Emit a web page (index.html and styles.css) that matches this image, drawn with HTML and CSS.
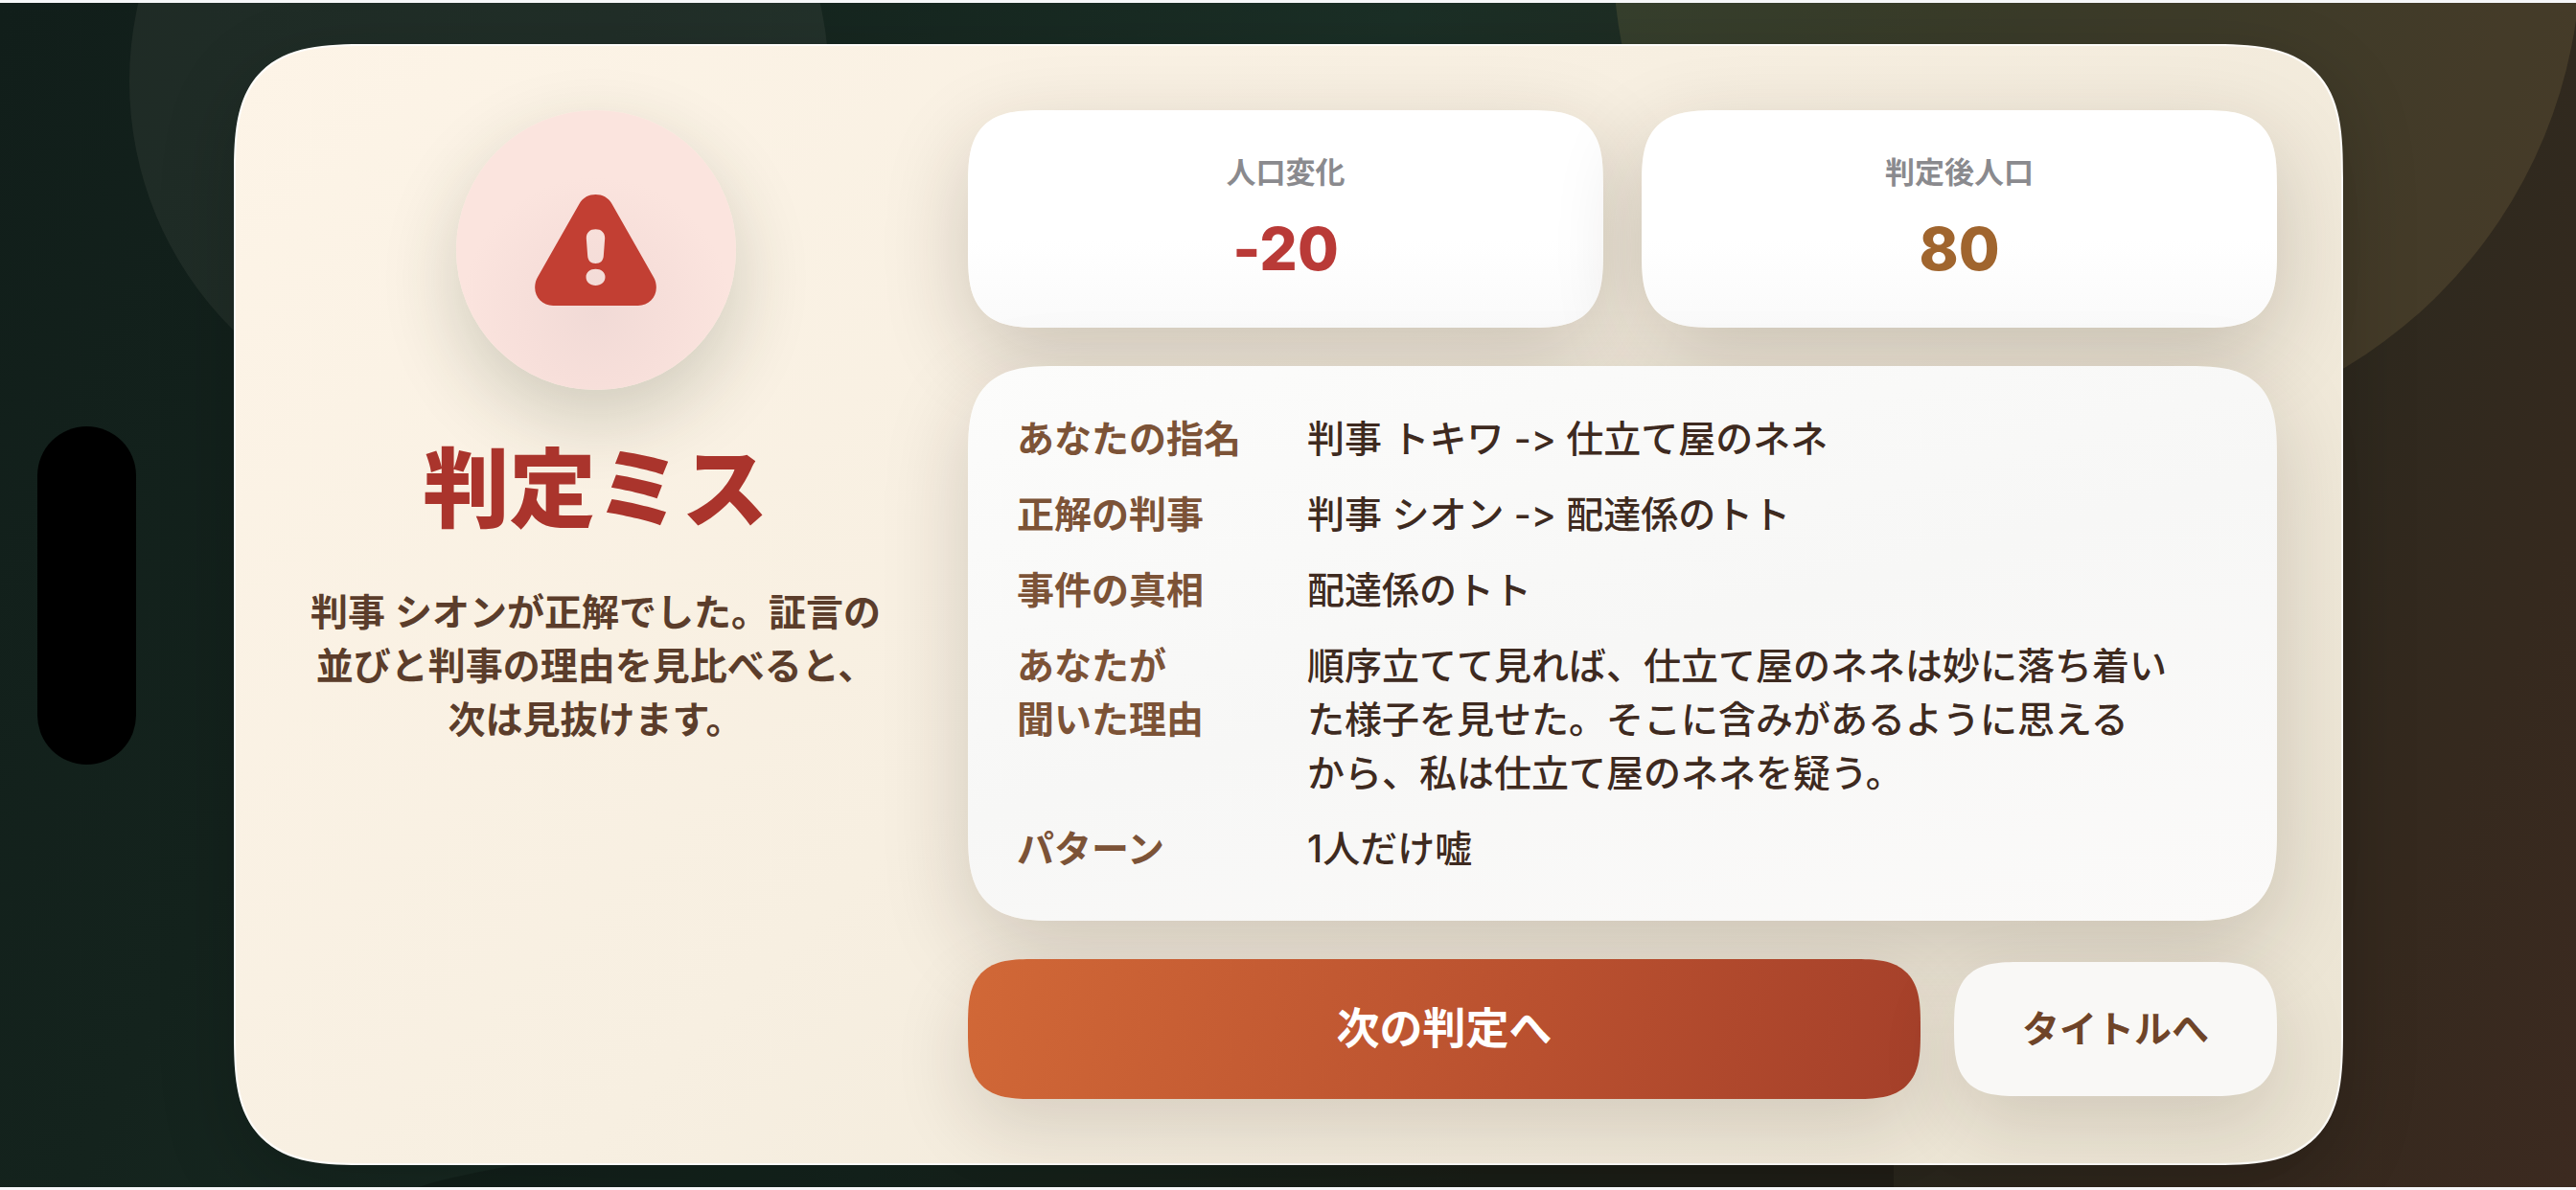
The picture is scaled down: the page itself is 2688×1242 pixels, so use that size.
FILE: index.html
```html
<!DOCTYPE html>
<html lang="ja">
<head>
<meta charset="utf-8">
<title>判定ミス</title>
<link rel="stylesheet" href="styles.css">
</head>
<body>
<div class="stage">
  <div class="orb orb-left"></div>
  <div class="orb orb-right"></div>
  <div class="hill"></div>
  <div class="island"></div>
  <main class="card">
    <section class="verdict">
      <div class="badge">
        <svg class="badge-icon" viewBox="0 0 380 348" aria-hidden="true">
          <path fill="#c23f33" fill-rule="evenodd" d="M190 0C211 0 229 9 241 29L371 258C377 268 380 280 380 291C380 323 355 348 323 348H57C25 348 0 323 0 291C0 280 3 268 9 258L139 29C151 9 169 0 190 0ZM190 109C172 109 160 120 161 138L165 192C166 207 175 216 190 216C205 216 214 207 215 192L219 138C220 120 208 109 190 109ZM190 233C173 233 160 243 160 258C160 274 173 285 190 285C207 285 220 274 220 258C220 243 207 233 190 233Z"/>
        </svg>
      </div>
      <h1 class="verdict-title">判定ミス</h1>
      <p class="verdict-text">判事 シオンが正解でした。証言の並びと判事の理由を見比べると、次は見抜けます。</p>
    </section>
    <section class="report">
      <div class="stats">
        <div class="stat">
          <span class="stat-label">人口変化</span>
          <span class="stat-value stat-loss">-20</span>
        </div>
        <div class="stat">
          <span class="stat-label">判定後人口</span>
          <span class="stat-value stat-total">80</span>
        </div>
      </div>
      <dl class="details">
        <dt>あなたの指名</dt><dd>判事 トキワ -&gt; 仕立て屋のネネ</dd>
        <dt>正解の判事</dt><dd>判事 シオン -&gt; 配達係のトト</dd>
        <dt>事件の真相</dt><dd>配達係のトト</dd>
        <dt>あなたが<br>聞いた理由</dt><dd>順序立てて見れば、仕立て屋のネネは妙に落ち着い<br>た様子を見せた。そこに含みがあるように思える<br>から、私は仕立て屋のネネを疑う。</dd>
        <dt>パターン</dt><dd>1人だけ嘘</dd>
      </dl>
      <div class="actions">
        <button class="btn btn-primary" type="button">次の判定へ</button>
        <button class="btn btn-secondary" type="button">タイトルへ</button>
      </div>
    </section>
  </main>
</div>
</body>
</html>
```
FILE: styles.css
```css
* { box-sizing: border-box; }

body {
  margin: 0;
  background: #f6f7f9;
  font-family: Inter, "Noto Sans CJK JP", sans-serif;
  font-feature-settings: "calt" 0;
}

.stage {
  position: relative;
  overflow: hidden;
  min-height: calc(100vh - 7px);
  margin: 3px 0 4px;
  padding: 43px 243px 23px 244px;
  background: linear-gradient(115deg, #111e1a 0%, #14231d 20%, #1b2f26 45%, #23291f 65%, #35291e 90%, #3c2a20 100%);
}

.orb { position: absolute; border-radius: 50%; }
.orb-left { left: 135px; top: -283px; width: 730px; height: 730px; background: rgba(255, 240, 225, 0.06); }
.orb-right { right: -5px; top: -558px; width: 1010px; height: 1010px; background: rgba(215, 185, 110, 0.13); }

.hill {
  position: absolute;
  left: 390px;
  top: 1164px;
  width: 1586px;
  height: 120px;
  border-top-left-radius: 1000px 103px;
  background: rgba(0, 0, 0, 0.2);
}

.island {
  position: absolute;
  left: 39px;
  top: 442px;
  width: 103px;
  height: 353px;
  border-radius: 52px;
  background: #000;
}

.card {
  position: relative;
  display: grid;
  grid-template-columns: 617fr 1366fr;
  column-gap: 80px;
  padding: 67px;
  border: 2px solid rgba(255, 255, 255, 0.8);
  border-radius: 98px;
  background: linear-gradient(135deg, #fdf4e7 0%, #f7efe1 45%, #ebe4d3 100%) border-box;
  box-shadow: 0 24px 80px rgba(0, 0, 0, 0.2);
}

.verdict {
  display: flex;
  flex-direction: column;
  align-items: center;
  text-align: center;
}

.badge {
  display: grid;
  place-items: center;
  width: 292px;
  height: 292px;
  border-radius: 50%;
  background: radial-gradient(circle at 50% 72%, #f1dad6 0%, #f7dfda 30%, #fbe4de 55%);
  box-shadow: 0 30px 80px rgba(40, 50, 30, 0.2);
}
.badge-icon { width: 127px; height: 116px; }

.verdict-title {
  margin: 50px 0 0;
  font-size: 90px;
  line-height: 108px;
  font-weight: 900;
  color: #aa342c;
}

.verdict-text {
  margin: 46px 0 0;
  font-size: 39px;
  line-height: 56px;
  font-weight: 600;
  color: #5b3d2b;
}

.report { display: flex; flex-direction: column; gap: 40px; }
.stats { display: grid; grid-template-columns: 1fr 1fr; gap: 40px; }

.stat {
  display: flex;
  flex-direction: column;
  align-items: center;
  gap: 22px;
  padding: 45px 40px 44px;
  border-radius: 56px;
  background: linear-gradient(#fff 60%, #fafafa);
  box-shadow: 0 30px 90px rgba(40, 30, 20, 0.2);
}
.stat-label { font-size: 31px; line-height: 40px; font-weight: 600; color: #8a8a8e; }
.stat-value { font-size: 62px; line-height: 76px; font-weight: 800; }
.stat-loss { color: #b93a37; }
.stat-total { color: #a0652e; }

.details {
  display: grid;
  grid-template-columns: 303px 1fr;
  row-gap: 23px;
  margin: 0;
  padding: 48px 51px 47px;
  border-radius: 66px;
  background: linear-gradient(165deg, #fcfcfb, #f7f7f6 50%, #fbfaf9);
  box-shadow: 0 30px 90px rgba(40, 30, 20, 0.18);
  font-size: 39px;
  line-height: 56px;
}
.details dt { font-weight: 700; color: #7c5337; }
.details dd { margin: 0; font-weight: 500; color: #3e2a20; }

.actions { display: flex; align-items: center; gap: 35px; }
.btn { border: 0; border-radius: 56px; font-family: inherit; box-shadow: 0 30px 80px rgba(40, 30, 20, 0.14); }
.btn-primary {
  flex: 1;
  padding: 43px 40px;
  font-size: 45px;
  line-height: 60px;
  font-weight: 600;
  color: #fff;
  background: linear-gradient(105deg, #d16837 0%, #b9502f 60%, #a5402a 100%);
}
.btn-secondary {
  padding: 42px 71px;
  font-size: 39px;
  line-height: 56px;
  font-weight: 600;
  color: #6f4428;
  background: #f9f8f6;
}

/* Continuous-curvature corners where the browser can draw them */
@supports (corner-shape: superellipse(1.6)) {
  .card, .stat, .details, .btn { corner-shape: superellipse(1.6); }
  .card { border-radius: 140px; }
  .details { border-radius: 96px; }
  .stat { border-radius: 80px; }
  .btn { border-radius: 70px; }
}
```
